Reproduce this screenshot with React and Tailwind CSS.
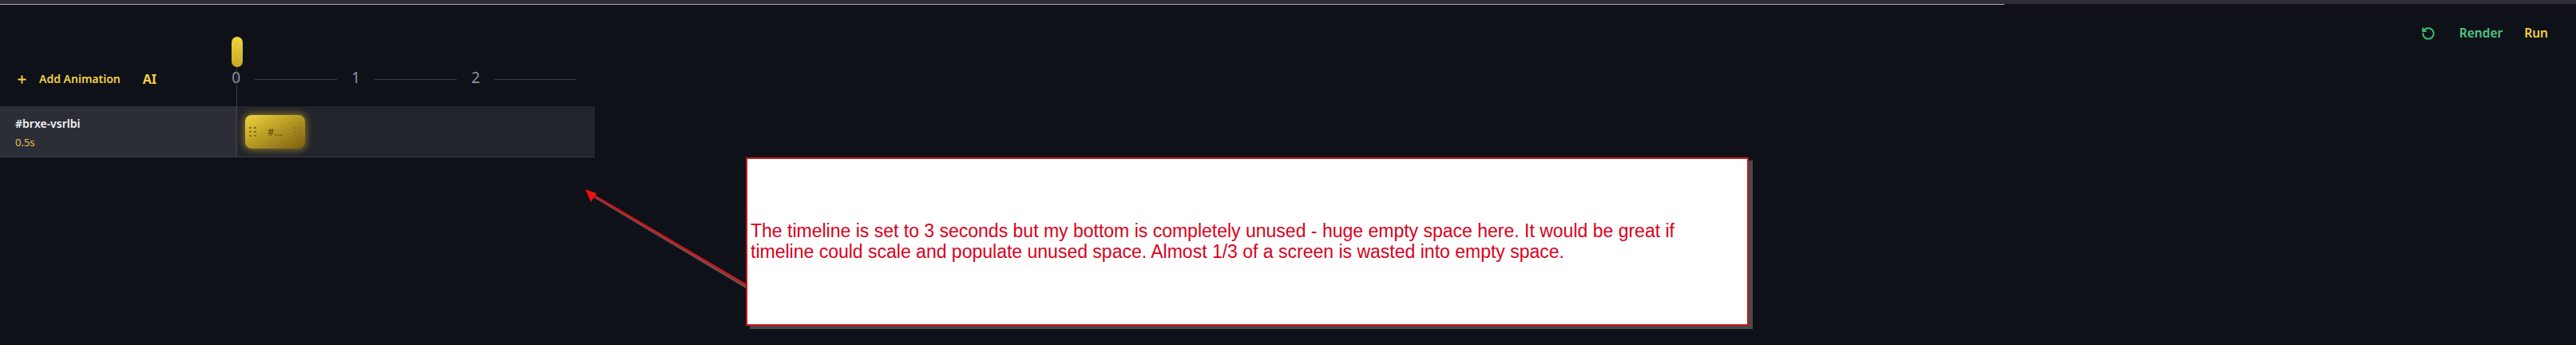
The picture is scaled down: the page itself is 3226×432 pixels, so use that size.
import React from "react";
import { Plus, RotateCcw } from "lucide-react";

function Dots({ className }) {
  return (
    <div className={"grid grid-cols-2 gap-x-[3px] gap-y-[3px] " + className}>
      {[0, 1, 2, 3, 4, 5].map((i) => (
        <span key={i} className="w-[3px] h-[2px] bg-current" />
      ))}
    </div>
  );
}

function Tick({ label }) {
  return (
    <div className="flex items-center w-[150px]">
      <span className="w-[50px] text-[19px] leading-none text-center font-normal text-[#8b93a3]">{label}</span>
      <span className="w-[108px] h-px bg-[#3b4048] mt-[4px]" />
    </div>
  );
}

export default function App() {
  return (
    <div
      className="relative w-[3226px] h-[432px] overflow-hidden bg-[#0f1119] flex flex-col"
      style={{ fontFamily: '"Noto Sans", sans-serif' }}
    >
      <div className="h-[5px] bg-[#2c2d37] shrink-0" />
      <div className="h-[1px] w-[2510px] bg-[#a9a9b0] shrink-0" />
      <div className="flex justify-end items-center gap-[27px] pr-[35px] pt-[34px] h-[38px] shrink-0">
        <RotateCcw size={18} strokeWidth={2.5} className="text-[#3fbf78] mr-[3px]" />
        <span className="text-[15.5px] leading-none font-semibold text-[#4ac985]">Render</span>
        <span className="text-[15.5px] leading-none font-semibold text-[#f2d243]">Run</span>
      </div>
      <div className="w-[745px] h-[89px] flex items-end shrink-0 pb-[26px]">
        <div className="w-[296px] flex items-center pl-[20px] text-[#f2d243]">
          <Plus size={15} strokeWidth={3} />
          <span className="ml-[14px] text-[14px] leading-none font-semibold">Add Animation</span>
          <span className="ml-[28px] text-[16px] leading-none font-bold">AI</span>
        </div>
        <div className="flex -ml-[24px]">
          <Tick label="0" />
          <Tick label="1" />
          <Tick label="2" />
        </div>
      </div>
      <div className="w-[745px] h-[64px] flex border-b border-[#3b3e46] shrink-0">
        <div className="w-[296px] bg-[#2c2e37] pl-[19px] pt-[12px] flex flex-col border-r border-[#3a3c42]">
          <span className="text-[14px] leading-[20px] font-semibold text-[#f3f4f6]">#brxe-vsrlbi</span>
          <span className="text-[13px] leading-[20px] mt-[3px] text-[#e0c548]">0.5s</span>
        </div>
        <div className="flex-1 bg-[#22242b] pl-[11px] pt-[11px]">
          <div className="w-[75px] h-[42px] rounded-[8px] flex items-center justify-between px-[5px] bg-gradient-to-br from-[#f0d53c] to-[#7c5f0e] shadow-[0_0_8px_2px_rgba(234,200,50,0.45)]">
            <Dots className="text-[#8a6d12]" />
            <span className="text-[13px] leading-none text-[#5c4507]">#...</span>
            <Dots className="text-[#8f7a2a]" />
          </div>
        </div>
      </div>

      <div className="absolute left-[290px] top-[46px] w-[14px] h-[38px] rounded-full bg-gradient-to-b from-[#efd53e] to-[#c7a826]" />
      <div className="absolute left-[296px] top-[84px] w-px h-[112px] bg-[#3a3d44]" />

      <svg className="absolute left-[725px] top-[230px]" width="215" height="140" viewBox="0 0 215 140">
        <line x1="210" y1="129" x2="14" y2="12" stroke="#6b5052" strokeWidth="3" transform="translate(1,1.5)" />
        <line x1="210" y1="127" x2="14" y2="12" stroke="#d0161a" strokeWidth="2.5" />
        <polygon points="8,7 22,12 15,23" fill="#ee1111" />
      </svg>

      <div className="absolute left-[934px] top-[197px] w-[1256px] h-[211px] bg-white border-[2px] border-[#c81414] shadow-[5px_4px_0_#4a4a4c] flex items-center pl-[4px] pr-[60px]">
        <p
          className="text-[23px] leading-[26px] text-[#d9001b] m-0 -mt-[2px]"
          style={{ fontFamily: '"Liberation Sans", Arial, sans-serif' }}
        >
          The timeline is set to 3 seconds but my bottom is completely unused - huge empty space here. It would be great if timeline could scale and populate unused space. Almost 1/3 of a screen is wasted into empty space.
        </p>
      </div>
    </div>
  );
}
